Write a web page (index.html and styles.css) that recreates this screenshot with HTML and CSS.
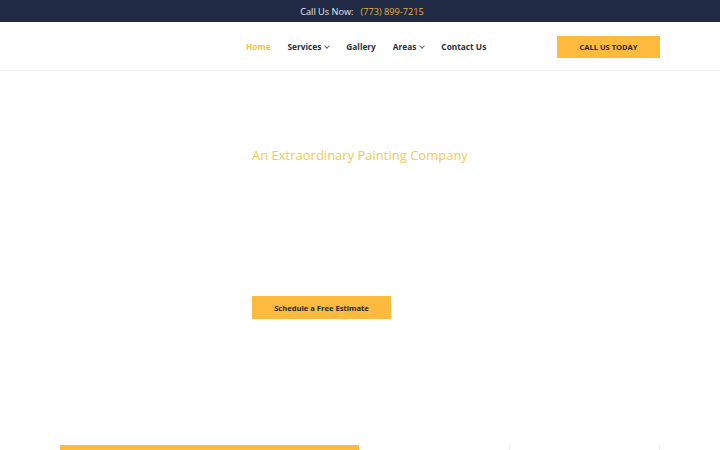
FILE: index.html
```html
<!doctype html>
<html lang="en">
<head>
    <meta charset="UTF-8">
    <meta name="viewport" content="width=device-width, initial-scale=1.0">
    <title>An Extraordinary Painting Company</title>
    <link rel="stylesheet" href="styles.css">
</head>
<body>
<div class="topbar">
    <span class="topbar-label">Call Us Now:</span>
    <a href="tel:7738997215" class="topbar-phone">(773) 899-7215</a>
</div>
<header class="header">
    <div class="container header-inner">
        <div class="logo"></div>
        <nav class="nav">
            <a href="#" class="nav-link active">Home</a>
            <a href="#" class="nav-link">Services <span class="caret"></span></a>
            <a href="#" class="nav-link">Gallery</a>
            <a href="#" class="nav-link">Areas <span class="caret"></span></a>
            <a href="#" class="nav-link">Contact Us</a>
        </nav>
        <a href="#" class="btn btn-call">CALL US TODAY</a>
    </div>
</header>
<section class="hero">
    <div class="container hero-inner">
        <h2 class="hero-title">An Extraordinary Painting Company</h2>
        <a href="#" class="btn btn-estimate">Schedule a Free Estimate</a>
    </div>
</section>
<section class="features">
    <div class="container features-inner">
        <div class="feature feature-main"></div>
        <div class="feature"></div>
        <div class="feature feature-last"></div>
    </div>
</section>
</body>
</html>
```

FILE: styles.css
```css
html, body {
    margin: 0;
    padding: 0;
    overflow: hidden;
}

body {
    font-family: "Open Sans", "Liberation Sans", sans-serif;
    background: #fff;
    color: #222;
}

a {
    text-decoration: none;
}

.container {
    width: 600px;
    margin: 0 auto;
}

.topbar {
    height: 22px;
    background: #212a44;
    display: flex;
    justify-content: center;
    align-items: center;
    font-size: 9.2px;
    gap: 7px;
    padding-left: 4px;
}

.topbar-label {
    color: #e8e8ec;
}

.topbar-phone {
    color: #e0b245;
}

.header {
    height: 48px;
    border-bottom: 1px solid #f0f0f0;
}

.header-inner {
    height: 100%;
    display: flex;
    align-items: center;
}

.logo {
    width: 186px;
}

.nav {
    display: flex;
    gap: 17px;
    flex: 1;
    padding-top: 1px;
}

.nav-link {
    font-size: 8.3px;
    font-weight: 700;
    color: #2b2f3a;
    display: flex;
    align-items: center;
}

.nav-link.active {
    color: #f5c13f;
}

.caret {
    display: inline-block;
    width: 3px;
    height: 3px;
    border-right: 1px solid #666;
    border-bottom: 1px solid #666;
    transform: rotate(45deg);
    margin: -2px 0 0 4px;
}

.btn {
    display: flex;
    align-items: center;
    justify-content: center;
    background: #fdbb3d;
    color: #23262e;
    font-weight: 700;
}

.btn-call {
    width: 103px;
    height: 22px;
    font-size: 7.5px;
    margin-top: 1px;
}

.hero {
    height: 374px;
}

.hero-inner {
    padding-left: 192px;
    box-sizing: border-box;
    display: flex;
    flex-direction: column;
    align-items: flex-start;
}

.hero-title {
    margin: 75px 0 0;
    font-size: 13px;
    font-weight: 400;
    color: #f3c94e;
}

.btn-estimate {
    width: 139px;
    height: 23px;
    font-size: 7.6px;
    margin-top: 132px;
}

.features-inner {
    display: flex;
    height: 10px;
}

.feature {
    width: 150px;
    border-right: 1px solid #eee;
}

.feature-main {
    width: 300px;
    border-right: none;
    border-top: 5px solid #fdbb3d;
}
```
